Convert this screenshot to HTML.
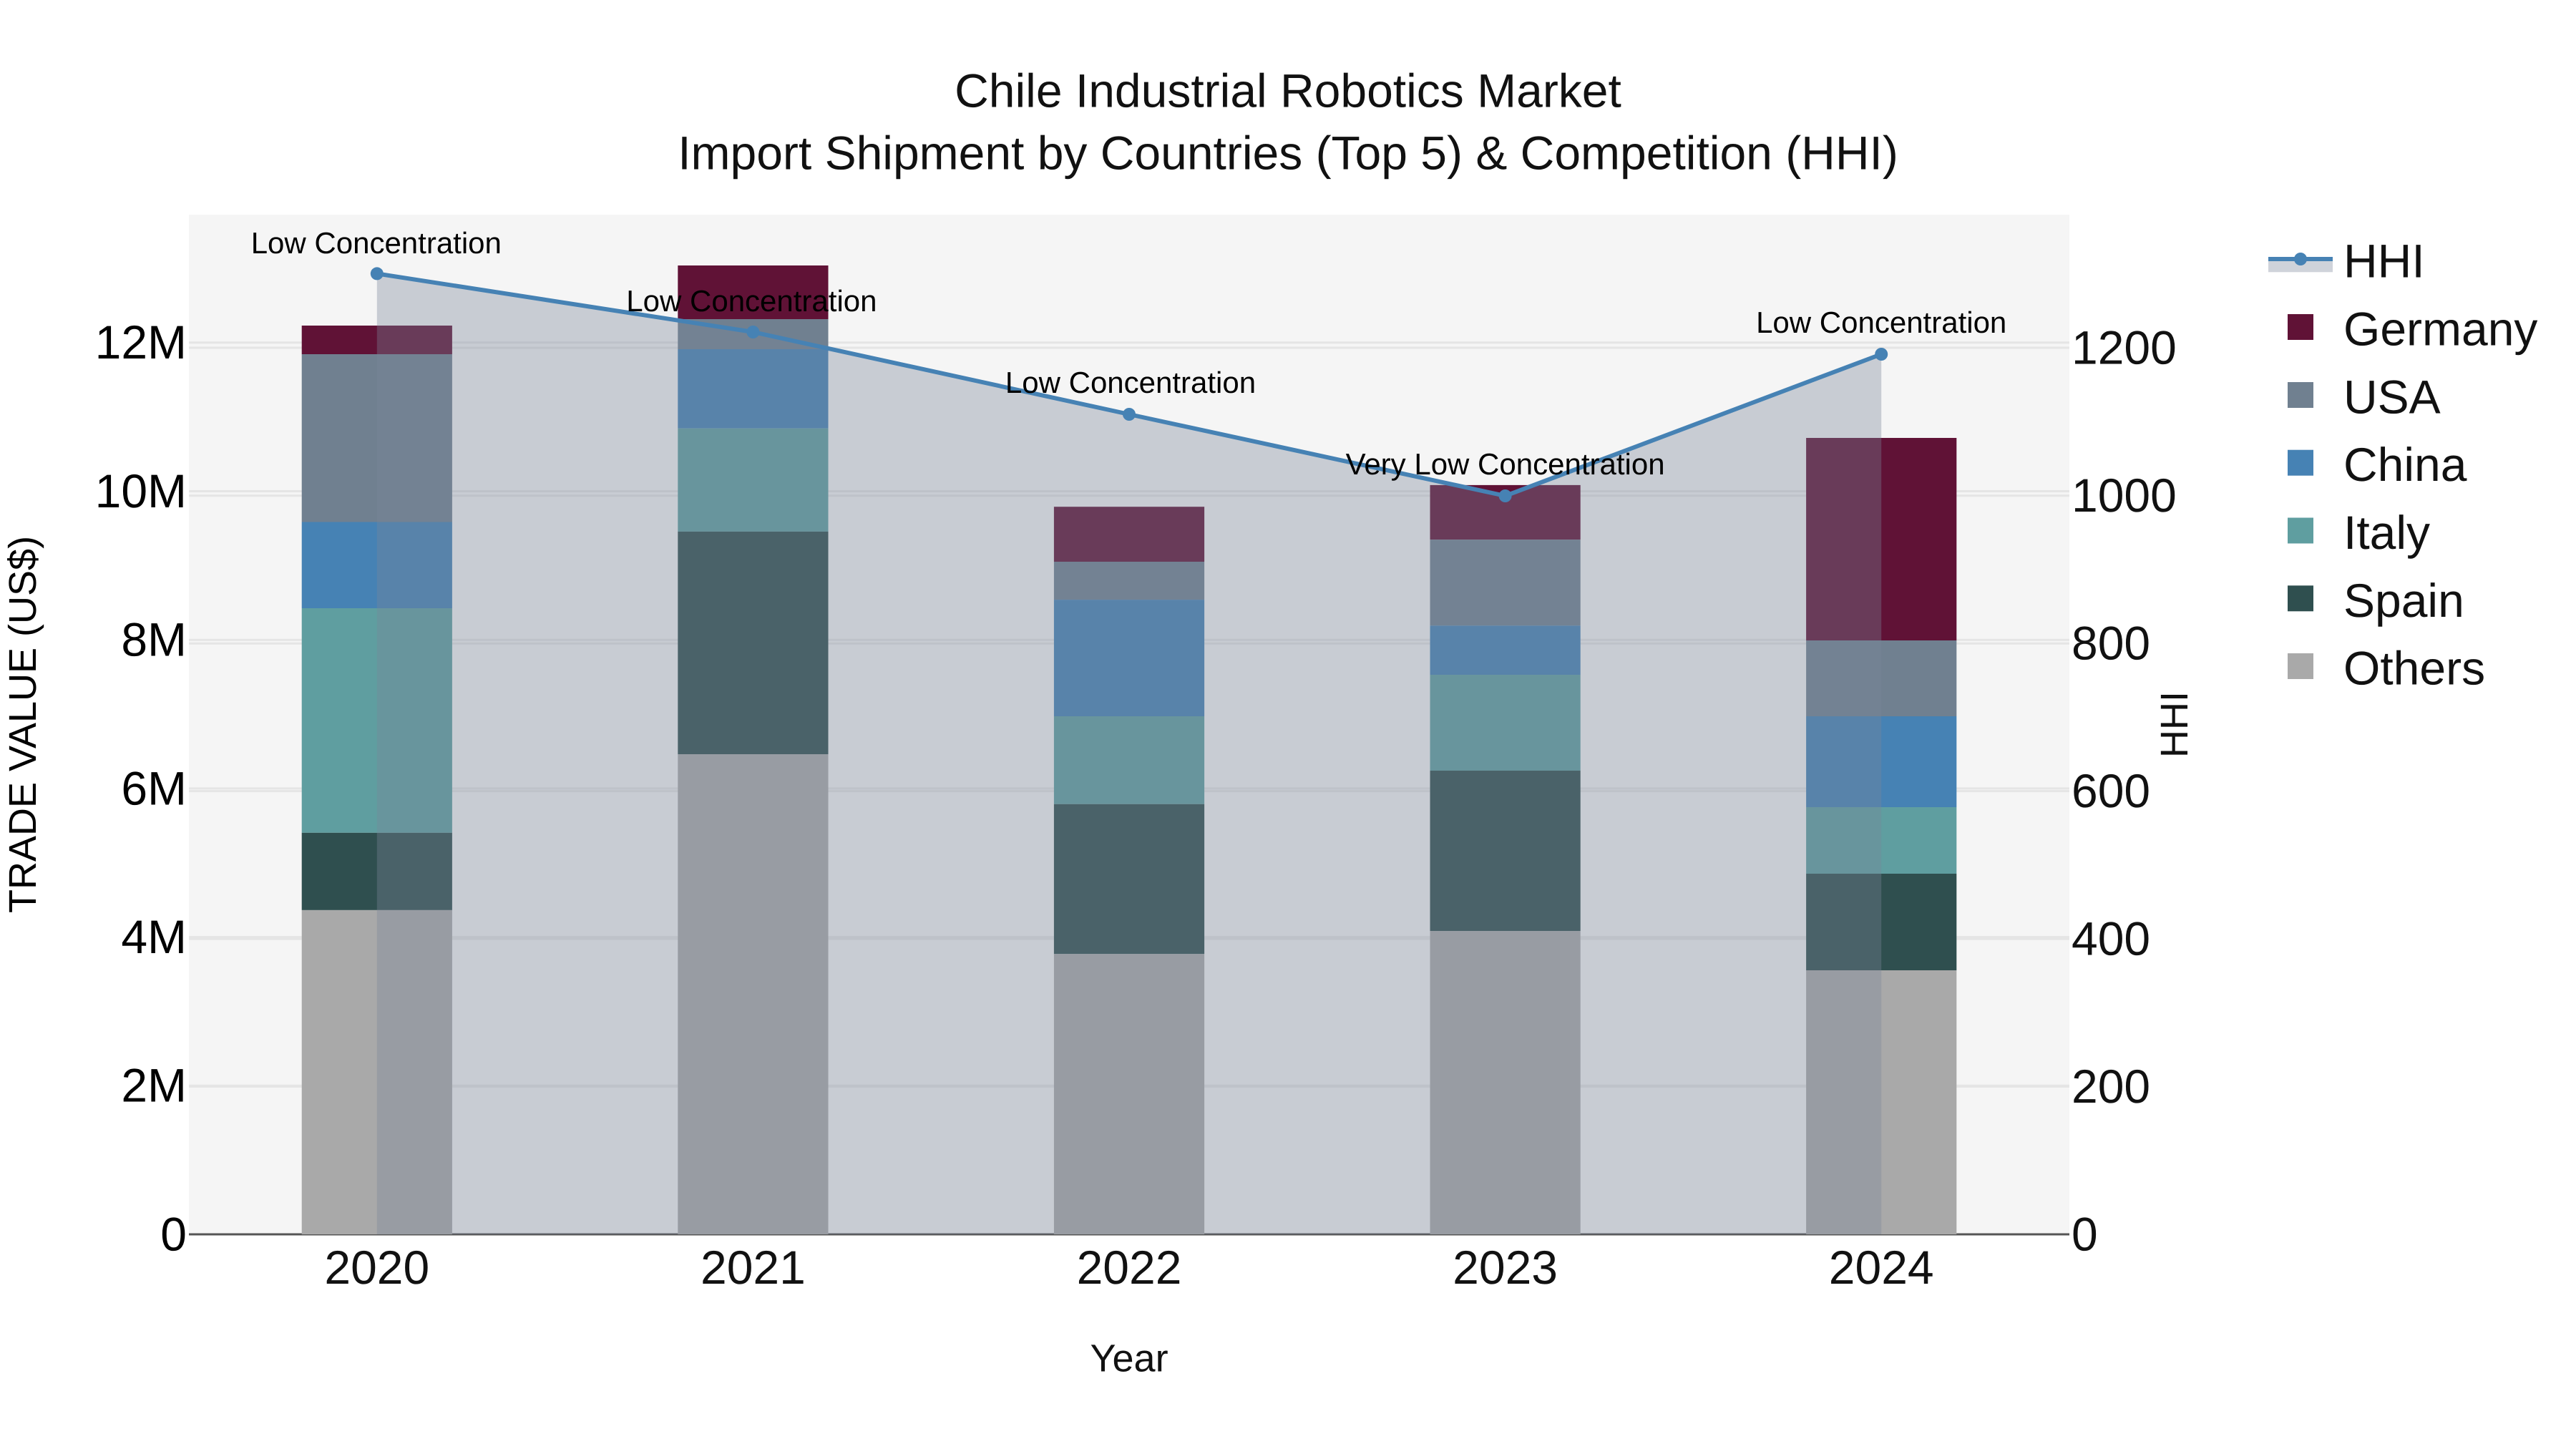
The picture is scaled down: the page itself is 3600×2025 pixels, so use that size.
<!DOCTYPE html>
<html lang="en">
<head>
<meta charset="utf-8">
<title>Chile Industrial Robotics Market</title>
<style>
html,body{margin:0;padding:0;background:#fff;width:3600px;height:2025px;overflow:hidden}
svg{display:block;position:absolute;left:0;top:0}
text{font-family:"Liberation Sans",Arial,sans-serif;text-rendering:geometricPrecision}
</style>
</head>
<body>
<svg width="3600" height="2025" viewBox="0 0 3600 2025" xmlns="http://www.w3.org/2000/svg">
<rect width="3600" height="2025" fill="#fff"/>
<rect x="264" y="300" width="2628" height="1425" fill="#f5f5f5"/>

<g stroke="#e5e5e5" stroke-width="3" fill="none">
<path d="M264 1517.3H2892M264 1309.6H2892M264 1101.9H2892M264 894.2H2892M264 686.5H2892M264 478.8H2892"/>
<path d="M264 1518.5H2892M264 1312.1H2892M264 1105.6H2892M264 899.2H2892M264 692.7H2892M264 486H2892"/>
</g>
<path d="M264 1725H2892" stroke="#555" stroke-width="3"/>

<!-- 2020 -->
<g>
<rect x="421.7" y="455" width="210.2" height="40" fill="#601236"/>
<rect x="421.7" y="495" width="210.2" height="234.5" fill="#708090"/>
<rect x="421.7" y="729.5" width="210.2" height="120.5" fill="#4682b4"/>
<rect x="421.7" y="850" width="210.2" height="313.8" fill="#5f9ea0"/>
<rect x="421.7" y="1163.8" width="210.2" height="108.1" fill="#2f4f4f"/>
<rect x="421.7" y="1271.9" width="210.2" height="453.1" fill="#a9a9a9"/>
</g>
<!-- 2021 -->
<g>
<rect x="947.3" y="371" width="210.2" height="75" fill="#601236"/>
<rect x="947.3" y="446" width="210.2" height="42" fill="#708090"/>
<rect x="947.3" y="488" width="210.2" height="110.7" fill="#4682b4"/>
<rect x="947.3" y="598.7" width="210.2" height="144.2" fill="#5f9ea0"/>
<rect x="947.3" y="742.9" width="210.2" height="311.1" fill="#2f4f4f"/>
<rect x="947.3" y="1054" width="210.2" height="671" fill="#a9a9a9"/>
</g>
<!-- 2022 -->
<g>
<rect x="1472.9" y="708.2" width="210.2" height="76.8" fill="#601236"/>
<rect x="1472.9" y="785" width="210.2" height="53.1" fill="#708090"/>
<rect x="1472.9" y="838.1" width="210.2" height="162.9" fill="#4682b4"/>
<rect x="1472.9" y="1001" width="210.2" height="122.8" fill="#5f9ea0"/>
<rect x="1472.9" y="1123.8" width="210.2" height="209.4" fill="#2f4f4f"/>
<rect x="1472.9" y="1333.2" width="210.2" height="391.8" fill="#a9a9a9"/>
</g>
<!-- 2023 -->
<g>
<rect x="1998.5" y="677.9" width="210.2" height="76.3" fill="#601236"/>
<rect x="1998.5" y="754.2" width="210.2" height="120.1" fill="#708090"/>
<rect x="1998.5" y="874.3" width="210.2" height="68.7" fill="#4682b4"/>
<rect x="1998.5" y="943" width="210.2" height="134" fill="#5f9ea0"/>
<rect x="1998.5" y="1077" width="210.2" height="224" fill="#2f4f4f"/>
<rect x="1998.5" y="1301" width="210.2" height="424" fill="#a9a9a9"/>
</g>
<!-- 2024 -->
<g>
<rect x="2524.1" y="612" width="210.2" height="283" fill="#601236"/>
<rect x="2524.1" y="895" width="210.2" height="106" fill="#708090"/>
<rect x="2524.1" y="1001" width="210.2" height="127" fill="#4682b4"/>
<rect x="2524.1" y="1128" width="210.2" height="93" fill="#5f9ea0"/>
<rect x="2524.1" y="1221" width="210.2" height="135" fill="#2f4f4f"/>
<rect x="2524.1" y="1356" width="210.2" height="369" fill="#a9a9a9"/>
</g>

<!-- HHI area and line -->
<polygon points="526.8,382.4 1052.4,464 1578,579 2103.6,693 2629.2,495 2629.2,1725 526.8,1725" fill="rgba(122,134,153,0.36)"/>
<polyline points="526.8,382.4 1052.4,464 1578,579 2103.6,693 2629.2,495" fill="none" stroke="#4682b4" stroke-width="6" stroke-linejoin="round"/>
<g fill="#4682b4">
<circle cx="526.8" cy="382.4" r="9"/>
<circle cx="1052.4" cy="464" r="9"/>
<circle cx="1578" cy="579" r="9"/>
<circle cx="2103.6" cy="693" r="9"/>
<circle cx="2629.2" cy="495" r="9"/>
</g>

<!-- Annotations -->
<g font-size="42" fill="#000" text-anchor="middle">
<text x="525.8" y="354">Low Concentration</text>
<text x="1050.4" y="435">Low Concentration</text>
<text x="1580" y="549">Low Concentration</text>
<text x="2103.6" y="663">Very Low Concentration</text>
<text x="2629.2" y="465">Low Concentration</text>
</g>

<!-- Title -->
<g font-size="66" fill="#111" text-anchor="middle">
<text x="1800" y="149.5">Chile Industrial Robotics Market</text>
<text x="1800" y="236.6">Import Shipment by Countries (Top 5) &amp; Competition (HHI)</text>
</g>

<!-- Left ticks -->
<g font-size="66" fill="#000" text-anchor="end">
<text x="261" y="1747.4">0</text>
<text x="261" y="1539.7">2M</text>
<text x="261" y="1332">4M</text>
<text x="261" y="1124.3">6M</text>
<text x="261" y="916.6">8M</text>
<text x="261" y="708.9">10M</text>
<text x="261" y="501.2">12M</text>
</g>

<!-- Right ticks -->
<g font-size="66" fill="#111">
<text x="2895" y="1747.4">0</text>
<text x="2895" y="1540.9">200</text>
<text x="2895" y="1334.5">400</text>
<text x="2895" y="1128">600</text>
<text x="2895" y="921.6">800</text>
<text x="2895" y="715.1">1000</text>
<text x="2895" y="508.4">1200</text>
</g>

<!-- X ticks -->
<g font-size="66" fill="#111" text-anchor="middle">
<text x="526.8" y="1793.8">2020</text>
<text x="1052.4" y="1793.8">2021</text>
<text x="1578" y="1793.8">2022</text>
<text x="2103.6" y="1793.8">2023</text>
<text x="2629.2" y="1793.8">2024</text>
</g>

<!-- Axis titles -->
<text x="1578" y="1916.7" font-size="54" fill="#111" text-anchor="middle">Year</text>
<text transform="translate(50,1012.5) rotate(-90)" font-size="54" fill="#000" text-anchor="middle">TRADE VALUE (US$)</text>
<text transform="translate(3057,1012.5) rotate(-90)" font-size="54" fill="#111" text-anchor="middle">HHI</text>

<!-- Legend -->
<rect x="3170" y="362" width="90" height="18.3" fill="rgba(122,134,153,0.36)"/>
<path d="M3170 362H3260" stroke="#4682b4" stroke-width="6"/>
<circle cx="3215" cy="362" r="9" fill="#4682b4"/>
<rect x="3197" y="439" width="36" height="36" fill="#601236"/>
<rect x="3197" y="534" width="36" height="36" fill="#708090"/>
<rect x="3197" y="628.7" width="36" height="36" fill="#4682b4"/>
<rect x="3197" y="723.5" width="36" height="36" fill="#5f9ea0"/>
<rect x="3197" y="818.3" width="36" height="36" fill="#2f4f4f"/>
<rect x="3197" y="913" width="36" height="36" fill="#a9a9a9"/>
<g font-size="66" fill="#111">
<text x="3275" y="387.7">HHI</text>
<text x="3275" y="482.6">Germany</text>
<text x="3275" y="577.4">USA</text>
<text x="3275" y="672.2">China</text>
<text x="3275" y="767">Italy</text>
<text x="3275" y="861.8">Spain</text>
<text x="3275" y="956.6">Others</text>
</g>
</svg>
</body>
</html>
